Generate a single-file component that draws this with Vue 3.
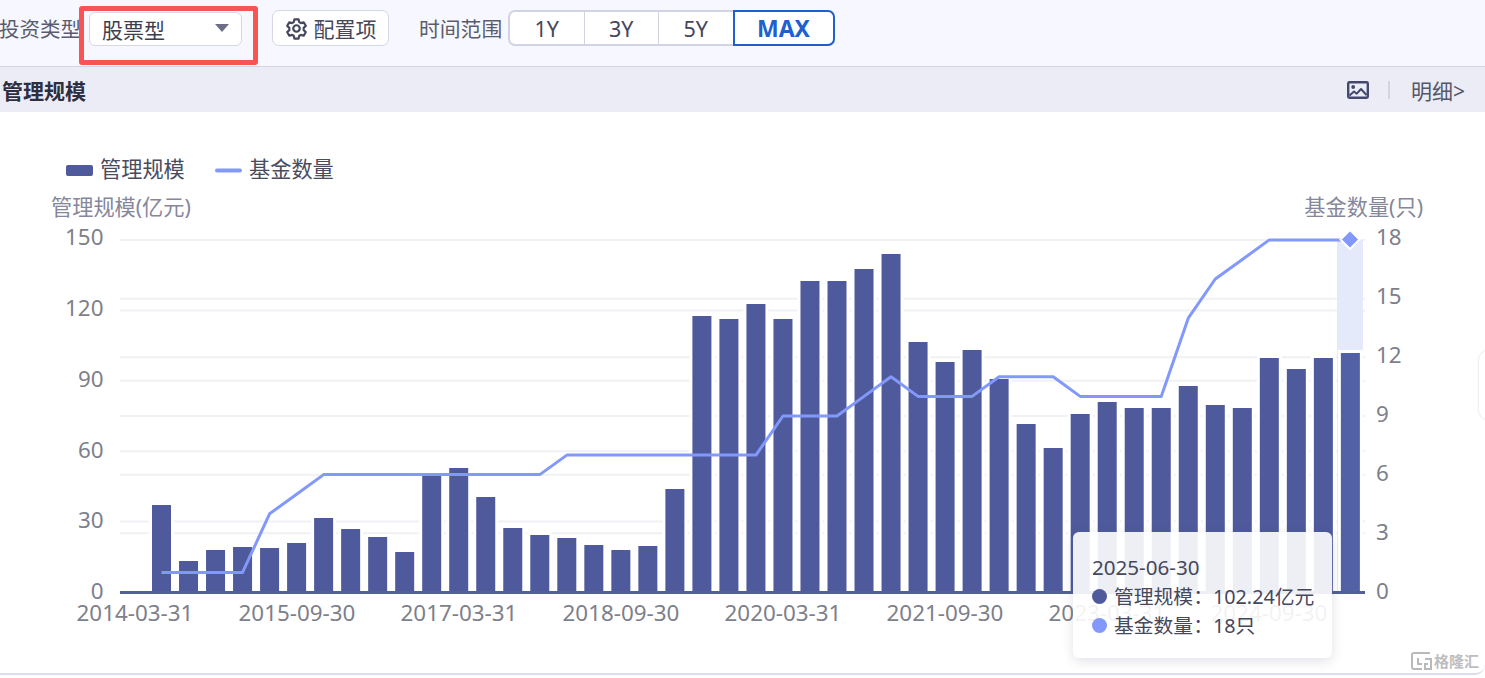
<script setup>
const tops = [505,561,550,547,548,543,518,529,537,552,473,468,497,528,535,538,545,550,546,489,316,319,304,319,281,281,269,254,342,362,350,379,424,448,414,402,408,408,386,405,408,358,369,358,353]
const counts = [1,1,1,1,4,5,6,6,6,6,6,6,6,6,6,7,7,7,7,7,7,7,7,9,9,9,10,11,10,10,10,11,11,11,10,10,10,10,14,16,17,18,18,18,18]
const xAt = i => 161.5 + i * 27.02
const bars = tops.map((t, i) => ({ x: xAt(i) - 9.5, y: t, h: 591 - t, last: i === tops.length - 1 }))
const linePts = counts.map((c, i) => `${xAt(i)},${(592 - c * 19.56).toFixed(1)}`).join(' ')
const leftGrid = [240, 310.4, 380.8, 451.2, 521.6]
const rightGrid = [298.7, 357.3, 416, 474.7, 533.3]
const leftTicks = [['150', 238], ['120', 309], ['90', 380], ['60', 451], ['30', 521], ['0', 592]]
const rightTicks = [['18', 238], ['15', 297], ['12', 356], ['9', 415], ['6', 474], ['3', 533], ['0', 592]]
const xLabels = [['2014-03-31', 134], ['2015-09-30', 296], ['2017-03-31', 458], ['2018-09-30', 620], ['2020-03-31', 782], ['2021-09-30', 944], ['2023-03-31', 1106], ['2024-09-30', 1268]]
const ranges = ['1Y', '3Y', '5Y']
</script>

<template>
  <div class="page">
    <div class="toolbar">
      <span class="label">投资类型</span>
      <div class="select">
        <span>股票型</span>
        <i class="caret"></i>
      </div>
      <button class="config">
        <svg width="23" height="23" viewBox="0 0 24 24" fill="none" stroke="#45475c" stroke-width="2.3" stroke-linejoin="round">
          <path d="M9.8 2.5h4.4l.7 2.9 1.7 1 2.9-.9 2.2 3.8-2.2 2v2.4l2.2 2-2.2 3.8-2.9-.9-1.7 1-.7 2.9H9.8l-.7-2.9-1.7-1-2.9.9-2.2-3.8 2.2-2v-2.4l-2.2-2 2.2-3.8 2.9.9 1.7-1z"/>
          <circle cx="12" cy="12" r="3.4"/>
        </svg>
        <span>配置项</span>
      </button>
      <span class="label time">时间范围</span>
      <div class="segments">
        <button v-for="r in ranges" :key="r" class="seg">{{ r }}</button>
        <button class="seg active">MAX</button>
      </div>
      <div class="highlight"></div>
    </div>

    <div class="band">
      <strong class="title">管理规模</strong>
      <div class="band-right">
        <svg width="22" height="18" viewBox="0 0 22 18" fill="none">
          <rect x="1.2" y="1.2" width="19.6" height="15.6" rx="1.2" stroke="#45486e" stroke-width="2.4"/>
          <circle cx="6.2" cy="6" r="1.9" fill="#45486e"/>
          <path d="M2.5 14.5l4.5-4 2.8 2.2L14 8l5.5 6" stroke="#45486e" stroke-width="2" stroke-linejoin="round"/>
        </svg>
        <i class="divider"></i>
        <span class="detail">明细&gt;</span>
      </div>
    </div>

    <div class="chart">
      <svg class="plot" width="1485" height="540" viewBox="0 112 1485 540">
        <line v-for="y in leftGrid" :key="'l' + y" x1="120" x2="1365" :y1="y" :y2="y" class="grid" />
        <line v-for="y in rightGrid" :key="'r' + y" x1="120" x2="1365" :y1="y" :y2="y" class="grid" />
        <rect x="1337" y="240" width="26" height="352" fill="#e4eafa" />
        <rect v-for="(b, i) in bars" :key="i" :x="b.x" :y="b.y" width="19" :height="b.h" :class="['bar', { last: b.last }]" />
        <line x1="120" x2="1365" y1="592.5" y2="592.5" stroke="#525f98" stroke-width="3" />
        <polyline :points="linePts" fill="none" stroke="#8299fb" stroke-width="3" stroke-linejoin="round" />
        <path d="M1350 230l9.5 9.5-9.5 9.5-9.5-9.5z" fill="#8299fb" stroke="#fff" stroke-width="2" />

        <g class="legend-text">
          <rect x="66" y="165" width="27" height="11" rx="2" fill="#4e5a9b" />
          <text x="100" y="176.5">管理规模</text>
          <line x1="217" x2="240" y1="170.5" y2="170.5" stroke="#8299fb" stroke-width="4" stroke-linecap="round" />
          <text x="249" y="176.5">基金数量</text>
        </g>

        <g class="tick">
          <text x="51" y="215" class="axis-name">管理规模(亿元)</text>
          <text x="1423" y="215" class="axis-name" text-anchor="end">基金数量(只)</text>
          <text v-for="t in leftTicks" :key="t[0]" x="103.5" :y="t[1] + 6.5" text-anchor="end">{{ t[0] }}</text>
          <text v-for="t in rightTicks" :key="t[0]" x="1376" :y="t[1] + 6.5">{{ t[0] }}</text>
          <text v-for="t in xLabels" :key="t[0]" :x="t[1] + 1" y="620.5" text-anchor="middle">{{ t[0] }}</text>
        </g>
      </svg>

      <div class="tooltip">
        <div class="tip-date">2025-06-30</div>
        <div class="tip-row"><i class="dot navy"></i>管理规模：<span class="value">102.24亿元</span></div>
        <div class="tip-row"><i class="dot blue"></i>基金数量：<span class="value">18只</span></div>
      </div>

      <div class="edge-widget"></div>

      <div class="watermark">
        <svg width="23" height="20" viewBox="0 0 23 20" fill="none" stroke="#b9b9bc" stroke-width="2">
          <path d="M20 2H4a2 2 0 0 0-2 2v12a2 2 0 0 0 2 2h8"/>
          <path d="M8 7v6h4M15 8h6v10h-6v-5h3"/>
        </svg>
        <span>格隆汇</span>
      </div>
    </div>
  </div>
</template>

<style>
html, body { margin: 0; background: #fff; }
</style>

<style scoped>
.page {
  width: 1485px;
  height: 678px;
  overflow: hidden;
  background: #fff;
  font-family: "Noto Sans", "Noto Sans CJK SC", sans-serif;
  color: #45475c;
}
.toolbar {
  position: relative;
  height: 67px;
  box-sizing: border-box;
  display: flex;
  align-items: flex-start;
  padding-top: 10px;
  background: #f7f8ff;
  border-bottom: 1px solid #d3d4e2;
}
.label {
  width: 80px;
  margin-left: -1px;
  margin-right: 1px;
  font-size: 20.5px;
  line-height: 38px;
  white-space: nowrap;
  color: #5a5c6e;
}
.select {
  margin: 2px 0 0 9px;
  width: 153px;
  height: 34px;
  box-sizing: border-box;
  display: flex;
  align-items: center;
  justify-content: space-between;
  padding: 0 12px 0 12px;
  background: #fff;
  border: 1px solid #d6d7e4;
  border-radius: 6px;
  font-size: 21px;
  color: #3c3e50;
}
.caret {
  width: 0;
  height: 0;
  border-left: 7px solid transparent;
  border-right: 7px solid transparent;
  border-top: 8px solid #6c6e86;
  margin-bottom: 3px;
}
.config {
  margin-left: 30px;
  width: 117px;
  height: 36px;
  box-sizing: border-box;
  display: flex;
  align-items: center;
  justify-content: center;
  gap: 6px;
  background: #fff;
  border: 1px solid #d6d7e4;
  border-radius: 7px;
  padding: 0;
  font: inherit;
  font-size: 21px;
  color: #45475c;
}
.time {
  margin-left: 30px;
  margin-right: 0;
  width: 83px;
  font-size: 20.8px;
  line-height: 38px;
}
.segments {
  margin-left: 6px;
  display: flex;
  height: 36px;
  box-sizing: border-box;
  background: #fff;
  border: 2px solid #d2d3e2;
  border-radius: 7px;
}
.seg {
  width: 74.5px;
  height: 100%;
  box-sizing: border-box;
  border: 0;
  border-right: 1.5px solid #d2d3e2;
  background: transparent;
  padding: 0;
  font: inherit;
  font-size: 21.5px;
  color: #45475c;
}
.seg.active {
  position: relative;
  width: 102px;
  height: 36px;
  margin: -2px -2px -2px -1px;
  border: 2px solid #1f5fd0;
  border-radius: 0 7px 7px 0;
  background: #fff;
  color: #1f5fd0;
  font-weight: 700;
  font-size: 23px;
}
.highlight {
  position: absolute;
  left: 79px;
  top: 6px;
  width: 179px;
  height: 59px;
  box-sizing: border-box;
  border: 5px solid #f85454;
  border-radius: 3px;
}
.band {
  height: 45px;
  display: flex;
  align-items: center;
  justify-content: space-between;
  background: #ebecf5;
  padding: 0 20px 0 2px;
}
.title {
  font-size: 21px;
  font-weight: 700;
  color: #2d2f40;
}
.band-right {
  display: flex;
  align-items: center;
}
.divider {
  width: 2px;
  height: 18px;
  margin: 0 21px 0 19px;
  background: #d3d4e2;
}
.detail {
  font-size: 21px;
  color: #55576a;
}
.chart {
  position: relative;
  height: 563px;
  box-sizing: border-box;
  border-bottom: 2px solid #dcdcf0;
  border-bottom-right-radius: 10px;
}
.plot {
  display: block;
}
.grid {
  stroke: #f0f1f4;
  stroke-width: 2;
}
.bar {
  fill: #4e5a9b;
  stroke: #fff;
  stroke-width: 6;
  paint-order: stroke;
}
.bar.last {
  fill: #5261a6;
}
.legend-text text {
  font-size: 21.2px;
  fill: #4a4c5e;
}
.tick text {
  font-size: 22.4px;
  fill: #7d7f8b;
}
.tick .axis-name {
  font-size: 21.2px;
  fill: #85879a;
}
.tooltip {
  position: absolute;
  left: 1073px;
  top: 420px;
  width: 259px;
  height: 126px;
  box-sizing: border-box;
  padding: 21px 0 0 19px;
  background: rgba(255, 255, 255, .9);
  border-radius: 6px;
  box-shadow: 0 3px 12px rgba(60, 70, 110, .16);
  font-size: 19.8px;
  color: #45475c;
}
.tip-date {
  font-size: 20.6px;
  line-height: 28px;
}
.tip-row {
  display: flex;
  align-items: center;
  line-height: 29px;
  white-space: nowrap;
  position: relative;
  top: 1px;
}
.dot {
  width: 15px;
  height: 15px;
  margin-right: 7px;
  border-radius: 50%;
}
.navy { background: #4e5a9b; }
.blue { background: #8299fb; }
.edge-widget {
  position: absolute;
  left: 1478px;
  top: 238px;
  width: 30px;
  height: 70px;
  box-sizing: border-box;
  border: 1px solid #f0f0f3;
  border-radius: 10px;
  background: #fff;
  box-shadow: 0 0 3px rgba(0, 0, 0, .04);
}
.watermark {
  position: absolute;
  left: 1410px;
  top: 539px;
  display: flex;
  align-items: center;
  gap: 1px;
  font-size: 15px;
  font-weight: 700;
  line-height: 20px;
  color: #bdbdc0;
}
</style>
